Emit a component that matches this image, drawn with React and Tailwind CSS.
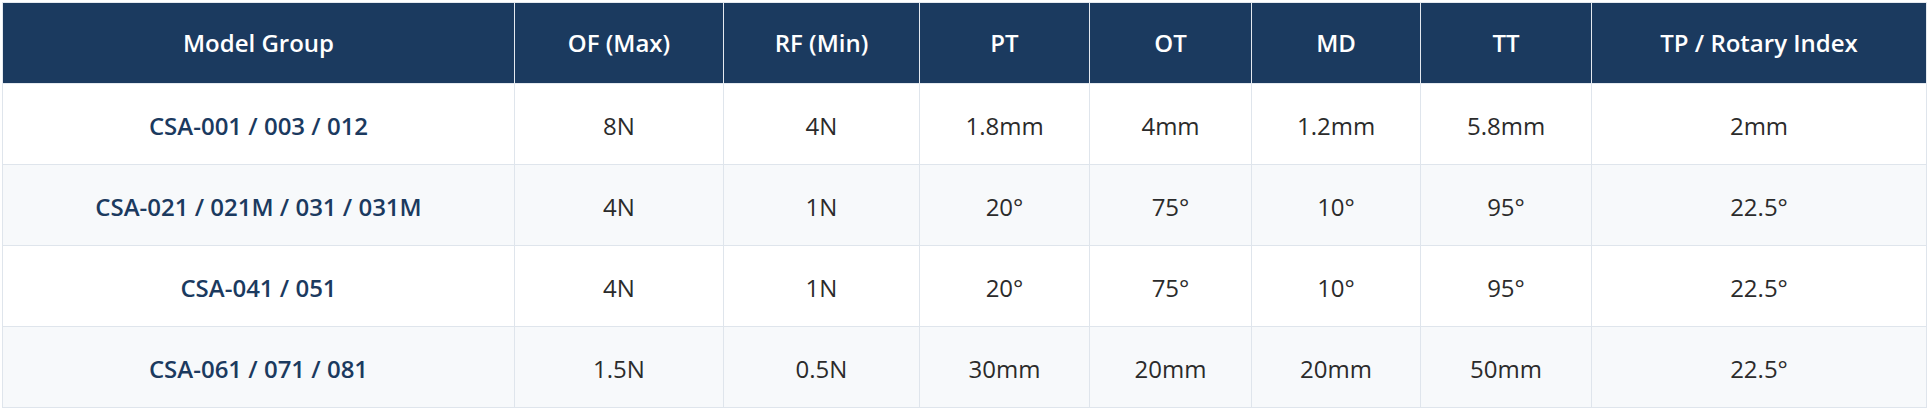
const columns = [
  { label: "Model Group", width: "w-[512px]" },
  { label: "OF (Max)", width: "w-[209px]" },
  { label: "RF (Min)", width: "w-[196px]" },
  { label: "PT", width: "w-[170px]" },
  { label: "OT", width: "w-[162px]" },
  { label: "MD", width: "w-[169px]" },
  { label: "TT", width: "w-[171px]" },
  { label: "TP / Rotary Index", width: "w-[335px]" },
];

const rows = [
  ["CSA-001 / 003 / 012", "8N", "4N", "1.8mm", "4mm", "1.2mm", "5.8mm", "2mm"],
  ["CSA-021 / 021M / 031 / 031M", "4N", "1N", "20°", "75°", "10°", "95°", "22.5°"],
  ["CSA-041 / 051", "4N", "1N", "20°", "75°", "10°", "95°", "22.5°"],
  ["CSA-061 / 071 / 081", "1.5N", "0.5N", "30mm", "20mm", "20mm", "50mm", "22.5°"],
];

export default function App() {
  return (
    <div className="w-[1928px] h-[412px] bg-white px-[2px] pt-[2px] font-['Open_Sans','Noto_Sans',sans-serif]">
      <table className="w-[1924px] table-fixed border-collapse border border-[#dfe5ec]">
        <thead>
          <tr className="h-[81px] bg-[#1b3a5f]">
            {columns.map((col) => (
              <th
                key={col.label}
                className={`${col.width} border border-[#e4e9ef] text-center text-[24px] font-semibold text-white`}
              >
                {col.label}
              </th>
            ))}
          </tr>
        </thead>
        <tbody>
          {rows.map((row, i) => (
            <tr key={row[0]} className={`h-[81px] ${i % 2 === 1 ? "bg-[#f7f9fb]" : "bg-white"}`}>
              {row.map((cell, j) => (
                <td
                  key={j}
                  className={`border border-[#dfe5ec] pt-[3px] text-center text-[24px] ${
                    j === 0 ? "font-semibold text-[#1b3a5f]" : "text-[#2b2b2b]"
                  }`}
                >
                  {cell}
                </td>
              ))}
            </tr>
          ))}
        </tbody>
      </table>
    </div>
  );
}
